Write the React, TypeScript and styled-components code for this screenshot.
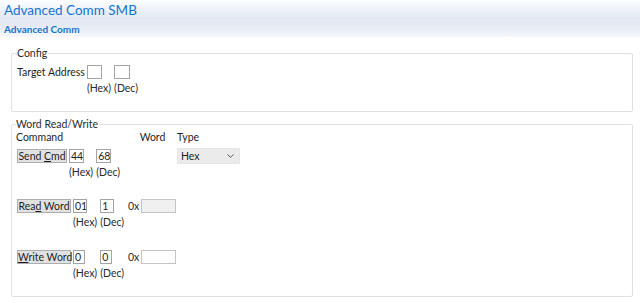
import styled, { createGlobalStyle } from 'styled-components';

const GlobalStyle = createGlobalStyle`
  body {
    margin: 0;
    background: #ffffff;
    font-family: Lato, "Noto Sans", sans-serif;
    font-size: 10.5px;
    color: #1e1e1e;
  }
`;

const Page = styled.div`
  width: 640px;
  height: 303px;
  overflow: hidden;
`;

const TitleBar = styled.div`
  height: 20px;
  padding-left: 4px;
  font-size: 13.5px;
  line-height: 21px;
  color: #1673cf;
  background: linear-gradient(to bottom, #fdfeff 0%, #eef2f8 45%, #e1e7f1 100%);
`;

const SubBar = styled.div`
  height: 16px;
  padding-left: 4px;
  font-size: 10px;
  font-weight: 700;
  line-height: 16px;
  color: #1673cf;
  border-top: 1px solid #e9edf5;
  background: linear-gradient(to bottom, #e2e8f1 0%, #e9edf4 50%, #f5f7fa 100%);
`;

const Content = styled.div`
  display: flex;
  flex-direction: column;
  gap: 6px;
  padding: 10px 7px 0 11px;
`;

const Group = styled.fieldset<{ $pad: string }>`
  margin: 0;
  padding: ${({ $pad }) => $pad};
  border: 1px solid #e0e0e0;
  border-radius: 2px;
  min-width: 0;
`;

const Legend = styled.legend`
  padding: 0 1px 0 0;
  line-height: 13px;
  color: #2a2a2a;
`;

const AddressRow = styled.div`
  display: flex;
  align-items: flex-start;
  gap: 3px;
`;

const Label = styled.span`
  line-height: 14px;
  margin-right: -1px;
`;

const Field = styled.div`
  display: flex;
  flex-direction: column;
  align-items: flex-start;
  gap: 3px;
`;

const Caption = styled.span`
  line-height: 13px;
  color: #2a2a2a;
`;

const Box = styled.input<{ $w: number }>`
  box-sizing: border-box;
  width: ${({ $w }) => $w}px;
  height: 14px;
  margin: 0;
  padding: 0 0 0 1px;
  border: 1px solid #a4a4a4;
  background: #ffffff;
  font-family: inherit;
  font-size: 10.5px;
  line-height: 12px;
  color: #1e1e1e;
  outline: none;
`;

const WordGrid = styled.div`
  display: grid;
  grid-template-columns: 112px 49px 1fr;
  row-gap: 5px;
`;

const Head = styled.span<{ $center?: boolean }>`
  line-height: 13px;
  text-align: ${({ $center }) => ($center ? 'center' : 'left')};
`;

const CmdBlock = styled.div<{ $gap: number }>`
  display: flex;
  align-items: flex-start;
  gap: 3px;
  margin-bottom: ${({ $gap }) => $gap}px;
`;

const CmdButton = styled.button<{ $w: number }>`
  box-sizing: border-box;
  width: ${({ $w }) => $w}px;
  height: 14px;
  margin: 0 -1px 0 1px;
  padding: 0;
  border: 1px solid #adadad;
  background: #e1e1e1;
  font-family: inherit;
  font-size: 10.5px;
  line-height: 12px;
  color: #1e1e1e;
  white-space: nowrap;
`;

const WordCell = styled.div`
  display: flex;
  align-items: center;
  gap: 2px;
  height: 14px;
`;

const Prefix = styled.span`
  line-height: 14px;
  color: #2a2a2a;
`;

const Output = styled.input<{ $disabled?: boolean }>`
  box-sizing: border-box;
  width: 35px;
  height: 14px;
  margin: 0;
  padding: 0 2px;
  border: 1px solid #c4c4c4;
  background: ${({ $disabled }) => ($disabled ? '#f0f0f0' : '#ffffff')};
  font-family: inherit;
  font-size: 10.5px;
  outline: none;
`;

const Select = styled.div`
  box-sizing: border-box;
  display: flex;
  align-items: center;
  justify-content: space-between;
  width: 63px;
  height: 16px;
  margin-top: -1px;
  padding: 0 5px 0 3px;
  border: 1px solid #e6e6e6;
  background: #ebebeb;
  line-height: 14px;
`;

const Chevron = () => (
  <svg width="7" height="4" viewBox="0 0 7 4">
    <path d="M0.5 0.5 L3.5 3.3 L6.5 0.5" fill="none" stroke="#555" strokeWidth="1" />
  </svg>
);

interface CmdProps {
  label: React.ReactNode;
  btnWidth: number;
  hex: string;
  dec: string;
  boxWidth: number;
  gap: number;
}

const Command = ({ label, btnWidth, hex, dec, boxWidth, gap }: CmdProps) => (
  <CmdBlock $gap={gap}>
    <CmdButton $w={btnWidth}>{label}</CmdButton>
    <Field>
      <Box $w={boxWidth} value={hex} readOnly />
      <Caption>(Hex)</Caption>
    </Field>
    <Field>
      <Box $w={boxWidth} value={dec} readOnly />
      <Caption>(Dec)</Caption>
    </Field>
  </CmdBlock>
);

export default function App() {
  return (
    <Page>
      <GlobalStyle />
      <TitleBar>Advanced Comm SMB</TitleBar>
      <SubBar>Advanced Comm</SubBar>
      <Content>
        <Group $pad="5px 4px 16px 5px">
          <Legend>Config</Legend>
          <AddressRow>
            <Label>Target Address</Label>
            <Field>
              <Box $w={15} value="" readOnly />
              <Caption>(Hex)</Caption>
            </Field>
            <Field>
              <Box $w={16} value="" readOnly />
              <Caption>(Dec)</Caption>
            </Field>
          </AddressRow>
        </Group>
        <Group $pad="0 4px 0 4px">
          <Legend>Word Read/Write</Legend>
          <WordGrid>
            <Head>Command</Head>
            <Head $center>Word</Head>
            <Head>Type</Head>

            <Command
              label={<>Send <u>C</u>md</>}
              btnWidth={50}
              hex="44"
              dec="68"
              boxWidth={15}
              gap={15}
            />
            <div />
            <Select>
              <span>Hex</span>
              <Chevron />
            </Select>

            <Command
              label={<>Rea<u>d</u> Word</>}
              btnWidth={54}
              hex="01"
              dec="1"
              boxWidth={14}
              gap={16}
            />
            <WordCell>
              <Prefix>0x</Prefix>
              <Output $disabled value="" readOnly />
            </WordCell>
            <div />

            <Command
              label={<><u>W</u>rite Word</>}
              btnWidth={54}
              hex="0"
              dec="0"
              boxWidth={12}
              gap={16}
            />
            <WordCell>
              <Prefix>0x</Prefix>
              <Output value="" readOnly />
            </WordCell>
            <div />
          </WordGrid>
        </Group>
      </Content>
    </Page>
  );
}
